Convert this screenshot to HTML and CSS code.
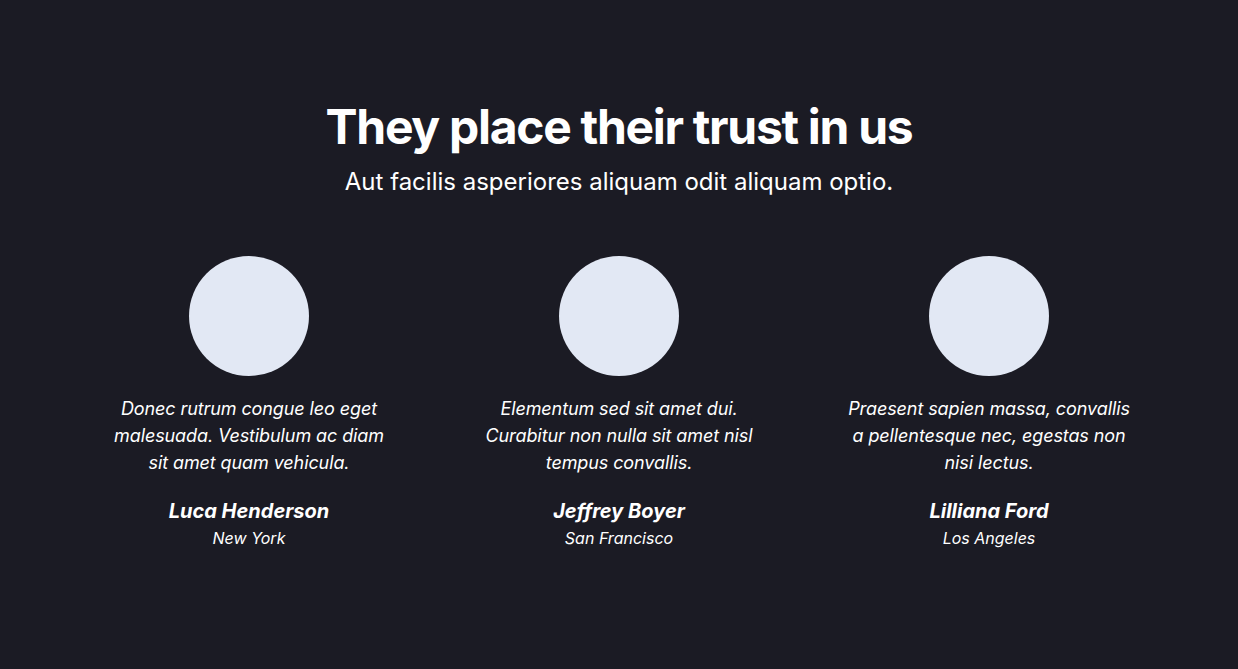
FILE: index.html
```html
<!DOCTYPE html>
<html lang="en">
<head>
<meta charset="utf-8">
<title>Testimonials</title>
<link rel="stylesheet" href="styles.css">
</head>
<body>
<section class="trust">
  <h1 class="trust-title">They place their trust in us</h1>
  <p class="trust-sub">Aut facilis asperiores aliquam odit aliquam optio.</p>
  <div class="cards">
    <div class="card">
      <div class="avatar"></div>
      <p class="quote">Donec rutrum congue leo eget malesuada. Vestibulum ac diam sit amet quam vehicula.</p>
      <p class="name">Luca Henderson</p>
      <p class="city">New York</p>
    </div>
    <div class="card">
      <div class="avatar"></div>
      <p class="quote">Elementum sed sit amet dui. Curabitur non nulla sit amet nisl tempus convallis.</p>
      <p class="name">Jeffrey Boyer</p>
      <p class="city">San Francisco</p>
    </div>
    <div class="card">
      <div class="avatar"></div>
      <p class="quote">Praesent sapien massa, convallis a pellentesque nec, egestas non nisi lectus.</p>
      <p class="name">Lilliana Ford</p>
      <p class="city">Los Angeles</p>
    </div>
  </div>
</section>
</body>
</html>
```

FILE: styles.css
```css
html, body {
  margin: 0;
  padding: 0;
  background: #1b1b24;
  color: #ffffff;
  font-family: Inter, "Noto Sans", sans-serif;
}
.trust {
  padding: 98px 64px 0;
  text-align: center;
}
.trust-title {
  margin: 0;
  font-size: 48px;
  line-height: 58px;
  font-weight: 700;
  letter-spacing: -1.3px;
}
.trust-sub {
  margin: 10px 0 0;
  font-size: 24px;
  line-height: 32px;
}
.cards {
  display: grid;
  grid-template-columns: repeat(3, 1fr);
  margin-top: 58px;
}
.card {
  padding: 0 41px;
  display: flex;
  flex-direction: column;
  align-items: center;
}
.avatar {
  width: 120px;
  height: 120px;
  border-radius: 50%;
  background: #e2e8f4;
}
.quote {
  margin: 19px 0 0;
  font-size: 18px;
  line-height: 27px;
  font-style: italic;
  letter-spacing: -0.1px;
}
.name {
  margin: 20px 0 0;
  font-size: 20px;
  line-height: 30px;
  font-weight: 700;
  font-style: italic;
}
.city {
  margin: 0;
  font-size: 16px;
  line-height: 24px;
  font-style: italic;
}
```
